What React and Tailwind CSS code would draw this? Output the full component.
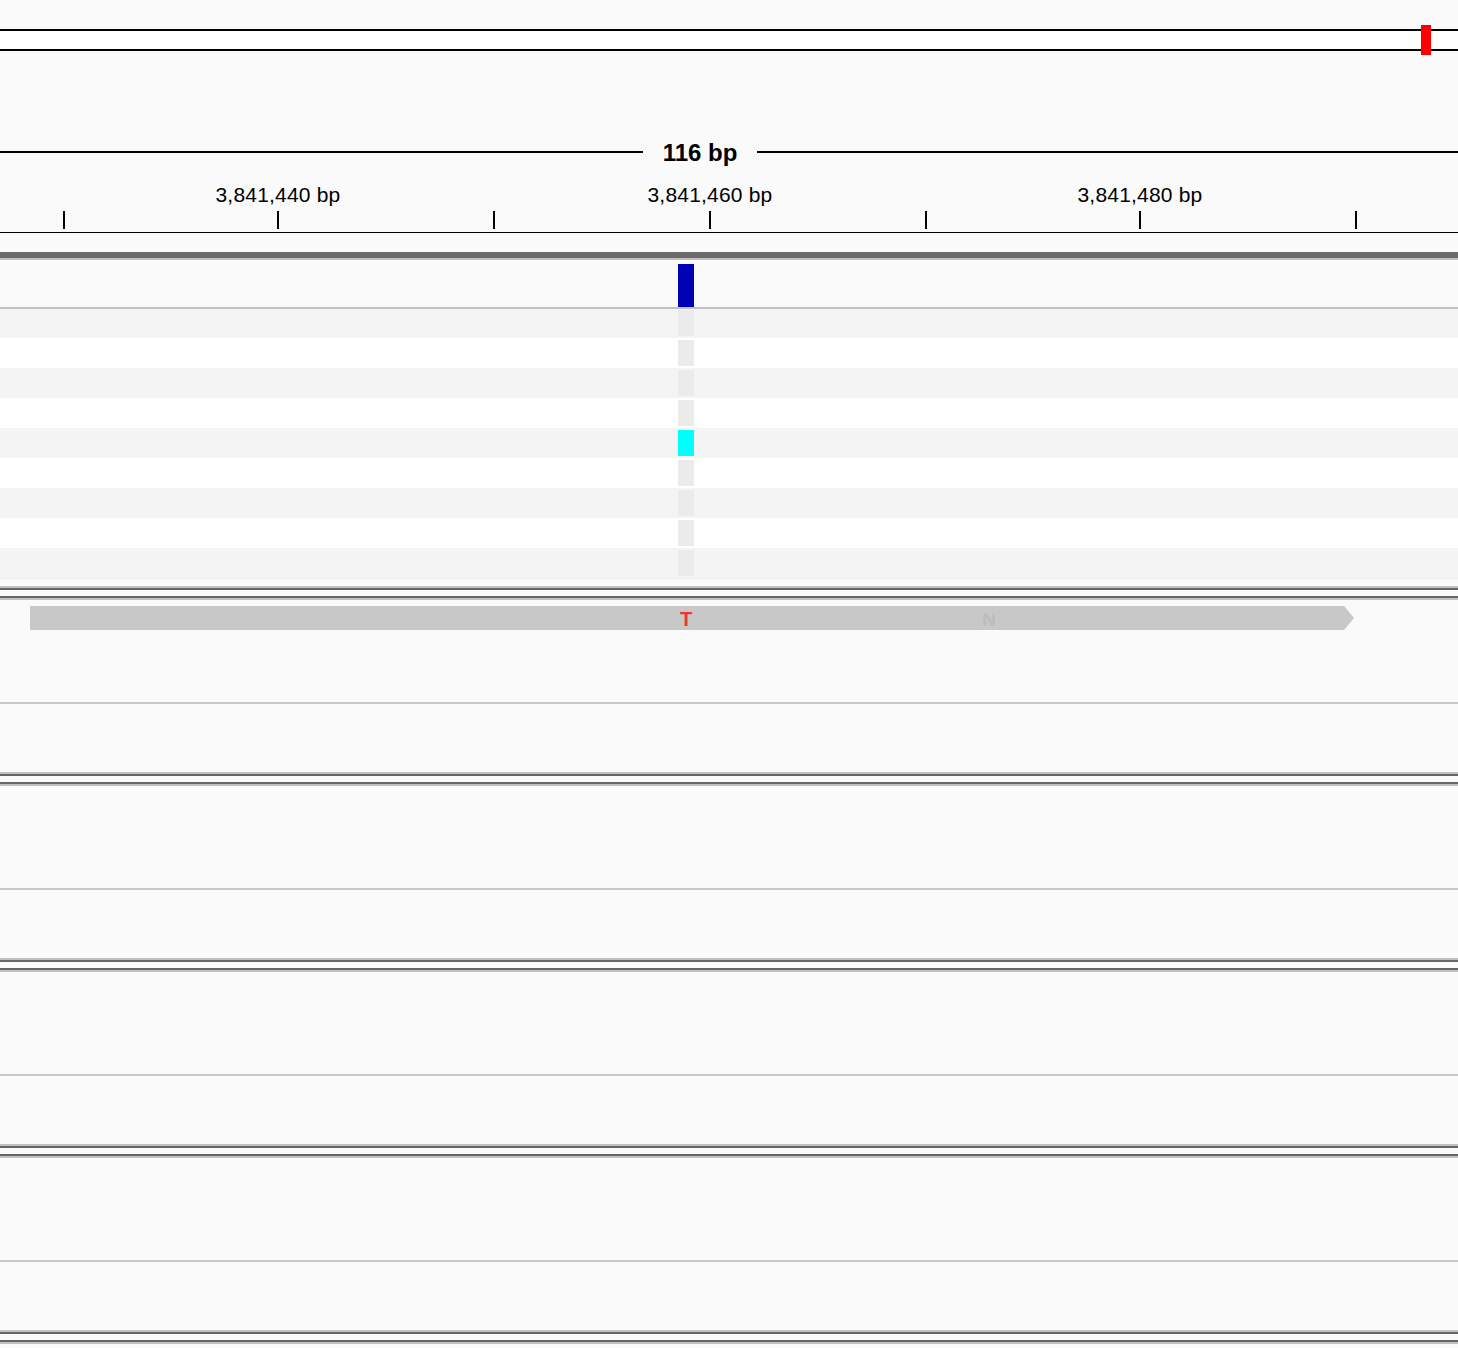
import React from "react";

const rows = [
  { bg: "bg-[#f4f4f4]", cell: "bg-[#ebebeb]", first: true },
  { bg: "bg-white", cell: "bg-[#ebebeb]" },
  { bg: "bg-[#f4f4f4]", cell: "bg-[#ebebeb]" },
  { bg: "bg-white", cell: "bg-[#ebebeb]" },
  { bg: "bg-[#f4f4f4]", cell: "bg-[#00ffff]" },
  { bg: "bg-white", cell: "bg-[#ebebeb]" },
  { bg: "bg-[#f4f4f4]", cell: "bg-[#ebebeb]" },
  { bg: "bg-white", cell: "bg-[#ebebeb]" },
  { bg: "bg-[#f4f4f4]", cell: "bg-[#ebebeb]" },
];

function Separator() {
  return (
    <div className="flex flex-col">
      <div className="h-[2px] bg-[#c0c0c0]" />
      <div className="h-[2px] bg-[#666666]" />
      <div className="h-[6px] bg-[#fafafa]" />
      <div className="h-[2px] bg-[#666666]" />
      <div className="h-[2px] bg-[#c0c0c0]" />
    </div>
  );
}

function Panel({ gene }) {
  return (
    <div className="flex h-[172px] flex-col">
      {gene ? (
        <>
          <div className="mt-[6px] flex h-[24px] pl-[30px]">
            <div className="relative h-[24px] w-[1314px] bg-[#c8c8c8]">
              <span className="absolute left-[650px] top-[1px] flex h-[24px] w-[12px] items-center justify-center text-[20px] font-bold leading-none text-[#ee3636]">
                T
              </span>
              <span className="absolute left-[953px] top-[1px] flex h-[24px] w-[12px] items-center justify-center text-[19px] font-bold leading-none text-[#bdbdbd]">
                N
              </span>
            </div>
            <svg width="10" height="24" viewBox="0 0 10 24" className="block">
              <polygon points="0,0 10,12 0,24" fill="#c8c8c8" />
            </svg>
          </div>
          <div className="mt-[72px] h-[2px] bg-[#c8c8c8]" />
        </>
      ) : (
        <div className="mt-[102px] h-[2px] bg-[#c8c8c8]" />
      )}
    </div>
  );
}

export default function App() {
  const tickGaps = ["ml-[63px]", "ml-[212px]", "ml-[214px]", "ml-[214px]", "ml-[214px]", "ml-[212px]", "ml-[214px]"];
  return (
    <div className="flex h-[1348px] w-[1458px] flex-col overflow-hidden bg-[#fafafa] font-[family-name:Liberation_Sans,Arial,sans-serif] text-black">
      {/* top overview */}
      <div className="h-[29px] shrink-0" />
      <div className="relative h-[22px] shrink-0 border-y-2 border-black bg-white">
        <div className="absolute left-[1421px] top-[-6px] h-[30px] w-[10px] bg-[#ff0000]" />
      </div>

      {/* ruler */}
      <div className="h-[89px] shrink-0" />
      <div className="flex h-[24px] shrink-0 items-center">
        <div className="h-[2px] w-[643px] bg-black" />
        <div className="w-[114px] pt-[2px] text-center text-[24px] font-bold leading-[24px]">116 bp</div>
        <div className="h-[2px] flex-1 bg-black" />
      </div>
      <div className="h-[20px] shrink-0" />
      <div className="flex h-[22px] shrink-0 text-[21px] leading-[22px] tracking-[0.2px]">
        <div className="ml-[170px] w-[216px] text-center">3,841,440 bp</div>
        <div className="ml-[216px] w-[216px] text-center">3,841,460 bp</div>
        <div className="ml-[214px] w-[216px] text-center">3,841,480 bp</div>
      </div>
      <div className="h-[5px] shrink-0" />
      <div className="flex h-[18px] shrink-0">
        {tickGaps.map((g, i) => (
          <div key={i} className={`${g} h-[18px] w-[2px] bg-black`} />
        ))}
      </div>
      <div className="h-[3px] shrink-0" />
      <div className="h-[1px] shrink-0 bg-black" />
      <div className="h-[19px] shrink-0" />

      {/* divider */}
      <div className="h-[6px] shrink-0 bg-[#6b6b6b]" />
      <div className="h-[2px] shrink-0 bg-[#c0c0c0]" />

      {/* coverage */}
      <div className="flex h-[47px] shrink-0">
        <div className="ml-[678px] mt-[4px] h-[43px] w-[16px] bg-[#0000b4]" />
      </div>
      <div className="h-[2px] shrink-0 bg-[#c0c0c0]" />

      {/* reads */}
      {rows.map((r, i) => (
        <div
          key={i}
          className={`flex shrink-0 ${r.bg} ${r.first ? "h-[29px] pt-[1px] pb-[2px]" : "h-[30px] py-[2px]"}`}
        >
          <div className={`ml-[678px] w-[16px] ${r.cell}`} />
        </div>
      ))}
      <div className="h-[1px] shrink-0 bg-[#ececec]" />
      <div className="h-[7px] shrink-0" />

      <Separator />
      <Panel gene />
      <Separator />
      <Panel />
      <Separator />
      <Panel />
      <Separator />
      <Panel />
      <Separator />
    </div>
  );
}
